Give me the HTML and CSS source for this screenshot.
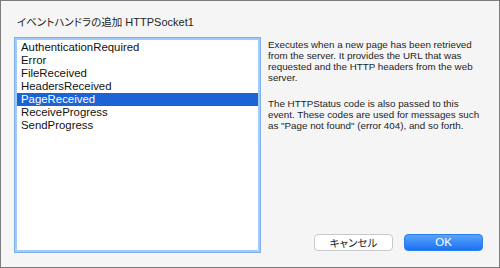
FILE: index.html
```html
<!DOCTYPE html>
<html lang="ja">
<head>
<meta charset="utf-8">
<link rel="stylesheet" href="styles.css">
</head>
<body>
<div class="window">
  <div class="title"><span class="ja">イベントハンドラの追加</span> HTTPSocket1</div>
  <div class="main">
    <div class="list">
      <div class="item">AuthenticationRequired</div>
      <div class="item">Error</div>
      <div class="item">FileReceived</div>
      <div class="item">HeadersReceived</div>
      <div class="item selected">PageReceived</div>
      <div class="item">ReceiveProgress</div>
      <div class="item">SendProgress</div>
    </div>
    <div class="side">
      <div class="desc">
        <p>Executes when a new page has been retrieved from the server. It provides the URL that was requested and the HTTP headers from the web server.</p>
        <p>The HTTPStatus code is also passed to this event. These codes are used for messages such as "Page not found" (error 404), and so forth.</p>
      </div>
      <div class="buttons">
        <button class="btn cancel"><span class="ja">キャンセル</span></button>
        <button class="btn ok">OK</button>
      </div>
    </div>
  </div>
</div>
</body>
</html>
```
FILE: styles.css
```css
html, body {
  margin: 0;
  padding: 0;
  background: #ffffff;
}
body {
  font-family: "Liberation Sans", "Noto Sans CJK JP", sans-serif;
  color: #1e1e1e;
}
.ja {
  font-family: "Noto Sans CJK JP", sans-serif;
  font-feature-settings: "palt";
}
.window {
  width: 500px;
  height: 268px;
  box-sizing: border-box;
  border: 1px solid #7c7c7c;
  background: #f5f5f5;
  padding: 13px 12px 14px 13px;
  display: flex;
  flex-direction: column;
}
.title {
  font-size: 11px;
  line-height: 15px;
  height: 15px;
  padding-left: 3px;
  color: #262626;
  white-space: nowrap;
}
.title .ja {
  font-size: 10.5px;
}
.main {
  margin-top: 8px;
  flex: 1;
  display: flex;
  gap: 7px;
}
.list {
  width: 247px;
  flex: none;
  box-sizing: border-box;
  background: #fff;
  border: 1px solid #7eaee6;
  box-shadow: inset 0 0 0 2px #a3cbf8;
  padding: 3px 2px;
  font-size: 11.4px;
}
.item {
  height: 13px;
  line-height: 13px;
  padding-left: 4px;
  color: #111;
}
.item.selected {
  background: #1c63d5;
  color: #fff;
}
.side {
  flex: 1;
  display: flex;
  flex-direction: column;
  justify-content: space-between;
  padding-bottom: 2px;
}
.desc {
  font-size: 9.8px;
  line-height: 11px;
  color: #1e1e1e;
  padding-top: 2px;
}
.desc p {
  margin: 0 0 15px 0;
}
.buttons {
  display: flex;
  justify-content: flex-end;
  gap: 11px;
  padding-right: 4px;
}
.btn {
  width: 79px;
  height: 17px;
  box-sizing: border-box;
  border-radius: 4px;
  font-family: "Liberation Sans", "Noto Sans CJK JP", sans-serif;
  font-size: 11.5px;
  line-height: 15px;
  padding: 0;
}
.cancel {
  background: #ffffff;
  border: 1px solid #c8c8c8;
  color: #222;
}
.cancel .ja {
  font-size: 10.5px;
}
.ok {
  background: linear-gradient(#5aa4fb, #1b72f1);
  border: 1px solid #2a7ef0;
  color: #fff;
}
```
